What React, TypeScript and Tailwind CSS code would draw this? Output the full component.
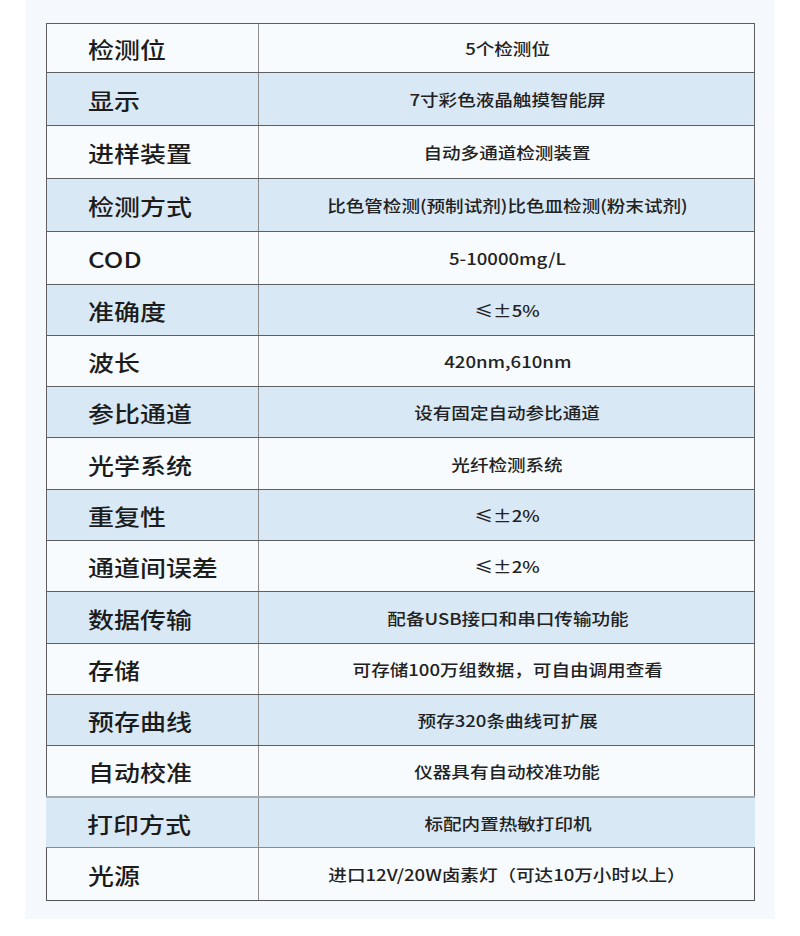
const rows: { label: string; value: string; h: string; blue: boolean; variant?: 'print' | 'last' }[] = [
  { label: '检测位', value: '5个检测位', h: 'h-[49px]', blue: false },
  { label: '显示', value: '7寸彩色液晶触摸智能屏', h: 'h-[53px]', blue: true },
  { label: '进样装置', value: '自动多通道检测装置', h: 'h-[53px]', blue: false },
  { label: '检测方式', value: '比色管检测(预制试剂)比色皿检测(粉末试剂)', h: 'h-[53px]', blue: true },
  { label: 'COD', value: '5-10000mg/L', h: 'h-[53px]', blue: false },
  { label: '准确度', value: '≤±5%', h: 'h-[51px]', blue: true },
  { label: '波长', value: '420nm,610nm', h: 'h-[51px]', blue: false },
  { label: '参比通道', value: '设有固定自动参比通道', h: 'h-[51px]', blue: true },
  { label: '光学系统', value: '光纤检测系统', h: 'h-[52px]', blue: false },
  { label: '重复性', value: '≤±2%', h: 'h-[51px]', blue: true },
  { label: '通道间误差', value: '≤±2%', h: 'h-[51px]', blue: false },
  { label: '数据传输', value: '配备USB接口和串口传输功能', h: 'h-[52px]', blue: true },
  { label: '存储', value: '可存储100万组数据，可自由调用查看', h: 'h-[51px]', blue: false },
  { label: '预存曲线', value: '预存320条曲线可扩展', h: 'h-[51px]', blue: true },
  { label: '自动校准', value: '仪器具有自动校准功能', h: 'h-[51px]', blue: false },
  { label: '打印方式', value: '标配内置热敏打印机', h: 'h-[51px]', blue: true, variant: 'print' },
  { label: '光源', value: '进口12V/20W卤素灯（可达10万小时以上）', h: 'h-[54px]', blue: false, variant: 'last' },
]

export default function App() {
  return (
    <div className="min-h-[936px] bg-white font-['Noto_Sans_CJK_SC',sans-serif]">
      <div className="mx-[25px] h-[919px] bg-[#f5f9fd] pl-[21px] pt-[23px]">
        <div className="flex w-[709px] flex-col">
          {rows.map((r) => {
            const border =
              r.variant === 'print'
                ? 'border-t-2 border-t-[#a3adb7]'
                : r.variant === 'last'
                  ? 'border-x border-y border-x-[#555] border-t-[#8a8a8a] border-b-[#555]'
                  : 'border-x border-t border-[#5f5f5f]'
            return (
              <div
                key={r.label}
                className={`flex ${r.h} ${border} ${r.blue ? 'bg-[#d9e8f5]' : 'bg-[#f7fbfe]'}`}
              >
                <div
                  className={`flex ${r.variant === 'print' ? 'w-[213px]' : 'w-[212px]'} shrink-0 items-center border-r border-[#8c8c8c] pl-[41px] pt-[1px] text-[22px] font-medium text-[#1c1c1c]`}
                >
                  <span className="origin-left scale-x-[1.18] whitespace-nowrap">{r.label}</span>
                </div>
                <div className="flex flex-1 items-center justify-center pl-[2px] text-[16px] font-medium text-[#222]">
                  <span className="scale-x-[1.16] whitespace-nowrap">{r.value}</span>
                </div>
              </div>
            )
          })}
        </div>
      </div>
    </div>
  )
}
